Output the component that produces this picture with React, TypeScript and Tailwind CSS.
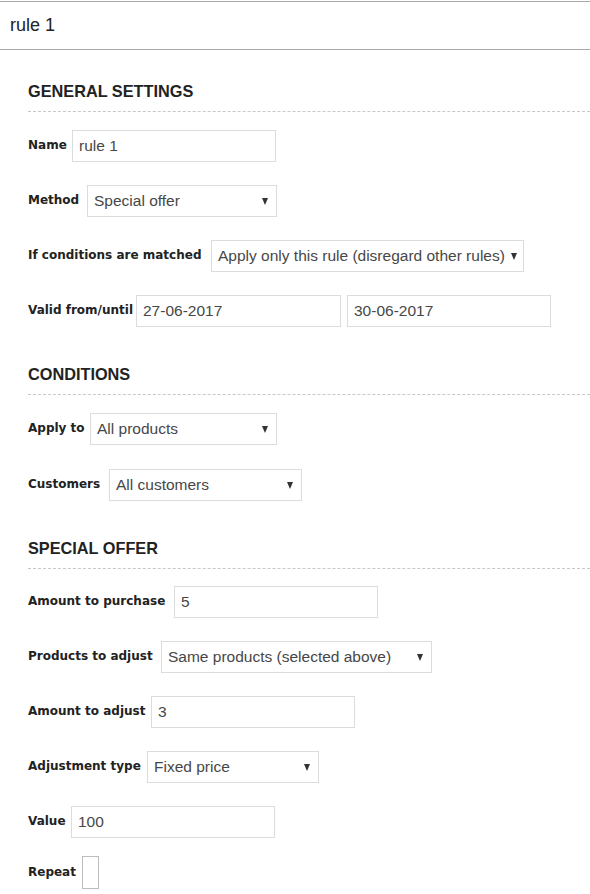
import React from "react";

const labelCls =
  "shrink-0 mb-[2px] text-[12px] font-bold text-[#222] whitespace-nowrap [font-family:'DejaVu_Sans',sans-serif]";
const ctrlFont = "[font-family:'Liberation_Sans',Arial,sans-serif] text-[15.5px] text-[#474747]";

function TextInput({ value, w = "w-[204px]" }: { value: string; w?: string }) {
  return (
    <input
      readOnly
      defaultValue={value}
      className={`${w} h-[32px] border border-[#dcdcdc] bg-white px-[6px] outline-none ${ctrlFont}`}
    />
  );
}

function Select({ value, w }: { value: string; w: string }) {
  return (
    <div
      className={`${w} h-[32px] border border-[#dcdcdc] bg-white pl-[6px] pr-[8px] flex items-center justify-between ${ctrlFont}`}
    >
      <span className="whitespace-nowrap">{value}</span>
      <span className="w-0 h-0 border-l-[3.5px] border-r-[3.5px] border-t-[7px] border-l-transparent border-r-transparent border-t-[#333] ml-[6px]" />
    </div>
  );
}

function Row({
  label,
  lw,
  children,
  mt = "mt-[23px]",
}: {
  label: string;
  lw: string;
  children: React.ReactNode;
  mt?: string;
}) {
  return (
    <div className={`flex items-center ${mt}`}>
      <span className={`${labelCls} ${lw}`}>{label}</span>
      {children}
    </div>
  );
}

function Section({ title, mt, children }: { title: string; mt: string; children: React.ReactNode }) {
  return (
    <div className={mt}>
      <div className="h-[31px] border-b border-dashed border-[#c8c8c8] leading-[20px] text-[16.3px] font-bold text-[#222] [font-family:'Liberation_Sans',Arial,sans-serif]">
        {title}
      </div>
      {children}
    </div>
  );
}

export default function App() {
  return (
    <div className="w-[590px] min-h-[894px] bg-white overflow-hidden">
      <div className="mt-[1px] h-[49px] border-t border-b border-[#aaaaaa] pl-[10px] flex items-center">
        <span className="text-[18px] text-[#222] [font-family:'Liberation_Sans',Arial,sans-serif]">rule 1</span>
      </div>
      <div className="pl-[28px]">
        <Section title="GENERAL SETTINGS" mt="mt-[31px]">
          <Row label="Name" lw="w-[44px]" mt="mt-[18px]">
            <TextInput value="rule 1" />
          </Row>
          <Row label="Method" lw="w-[59px]">
            <Select value="Special offer" w="w-[190px]" />
          </Row>
          <Row label="If conditions are matched" lw="w-[183px]">
            <Select value="Apply only this rule (disregard other rules)" w="w-[313px]" />
          </Row>
          <Row label="Valid from/until" lw="w-[108px]">
            <div className="flex gap-[6px]">
              <TextInput value="27-06-2017" w="w-[205px]" />
              <TextInput value="30-06-2017" />
            </div>
          </Row>
        </Section>
        <Section title="CONDITIONS" mt="mt-[37px]">
          <Row label="Apply to" lw="w-[62px]" mt="mt-[18px]">
            <Select value="All products" w="w-[187px]" />
          </Row>
          <Row label="Customers" lw="w-[81px]" mt="mt-[24px]">
            <Select value="All customers" w="w-[193px]" />
          </Row>
        </Section>
        <Section title="SPECIAL OFFER" mt="mt-[37px]">
          <Row label="Amount to purchase" lw="w-[146px]" mt="mt-[17px]">
            <TextInput value="5" />
          </Row>
          <Row label="Products to adjust" lw="w-[133px]">
            <Select value="Same products (selected above)" w="w-[271px]" />
          </Row>
          <Row label="Amount to adjust" lw="w-[123px]">
            <TextInput value="3" />
          </Row>
          <Row label="Adjustment type" lw="w-[119px]">
            <Select value="Fixed price" w="w-[172px]" />
          </Row>
          <Row label="Value" lw="w-[43px]">
            <TextInput value="100" />
          </Row>
          <Row label="Repeat" lw="w-[54px]" mt="mt-[18px]">
            <div className="w-[17px] h-[33px] border border-[#bdbdbd] bg-white" />
          </Row>
        </Section>
      </div>
    </div>
  );
}
